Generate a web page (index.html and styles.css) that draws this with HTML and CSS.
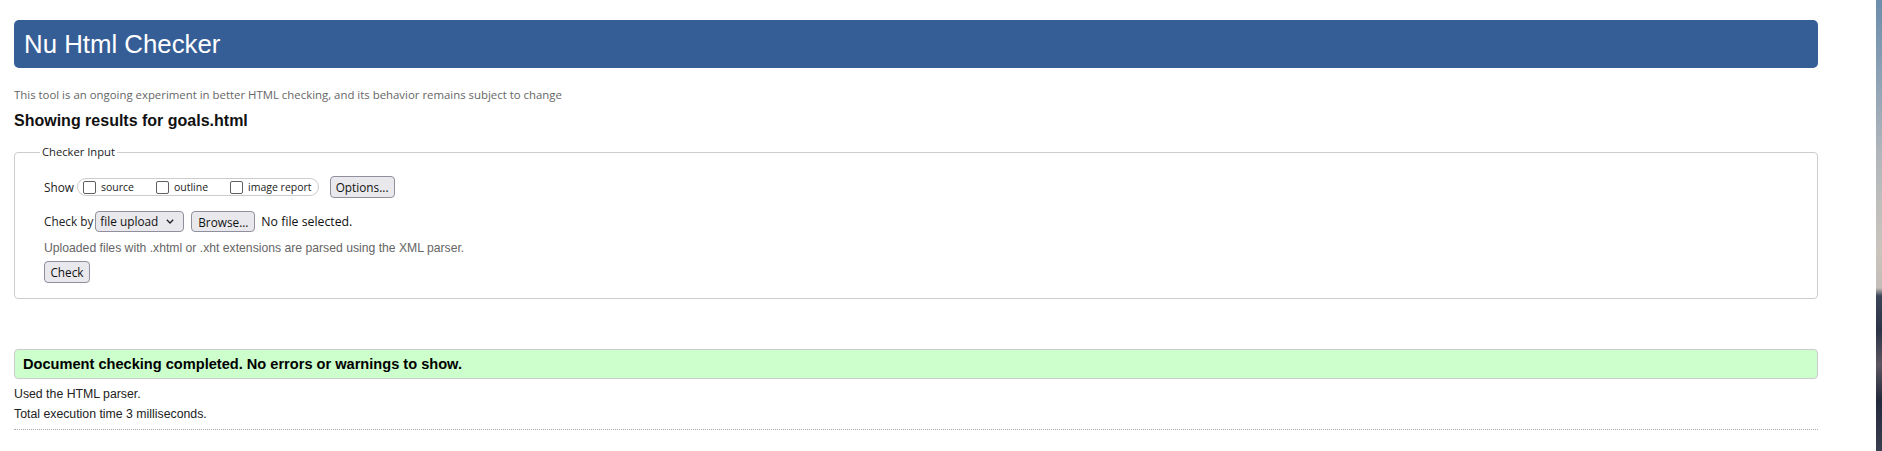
FILE: index.html
```html
<!DOCTYPE html>
<html lang="en">
<head>
<meta charset="utf-8">
<title>Nu Html Checker</title>
<link rel="stylesheet" href="styles.css">
</head>
<body>
<div class="page">
  <div class="container">
    <h1 class="banner">Nu Html Checker</h1>
    <p class="tagline">This tool is an ongoing experiment in better HTML checking, and its behavior remains subject to change</p>
    <h2 class="results">Showing results for goals.html</h2>
    <form class="checker">
      <fieldset class="input-box">
        <legend class="legend">Checker Input</legend>
        <div class="row row-show">
          <span class="label">Show</span>
          <div class="pill">
            <label class="opt"><input type="checkbox" class="cb"><span>source</span></label>
            <label class="opt"><input type="checkbox" class="cb"><span>outline</span></label>
            <label class="opt"><input type="checkbox" class="cb"><span>image report</span></label>
          </div>
          <button type="button" class="btn btn-options">Options...</button>
        </div>
        <div class="row row-check">
          <span class="label">Check by</span>
          <div class="select"><span>file upload</span><svg class="chev" width="8" height="5" viewBox="0 0 8 5"><polyline points="0.8,0.8 4,4 7.2,0.8" fill="none" stroke="#222" stroke-width="1.3"/></svg></div>
          <button type="button" class="btn btn-browse">Browse...</button>
          <span class="nofile">No file selected.</span>
        </div>
        <p class="hint">Uploaded files with .xhtml or .xht extensions are parsed using the XML parser.</p>
        <button type="button" class="btn btn-check">Check</button>
      </fieldset>
    </form>
    <p class="success">Document checking completed. No errors or warnings to show.</p>
    <p class="info info-first">Used the HTML parser.</p>
    <p class="info">Total execution time 3 milliseconds.</p>
    <hr class="rule">
  </div>
</div>
<div class="strip"></div>
</body>
</html>
```

FILE: styles.css
```css
* { box-sizing: border-box; }
html, body { margin: 0; height: 100%; }
body {
  display: flex;
  background: #fff;
  font-family: "Liberation Sans", Arial, sans-serif;
  color: #000;
}
.page { flex: 1; min-width: 0; }
.container { margin: 0 58px 0 14px; padding-top: 20px; }

.banner {
  margin: 0;
  height: 48px;
  display: flex;
  align-items: center;
  padding-left: 10px;
  background: #365e96;
  color: #fff;
  border-radius: 5px;
  font-size: 25.8px;
  font-weight: normal;
}
.tagline {
  margin: 19px 0 0;
  font-family: "Open Sans", sans-serif;
  font-size: 11.4px;
  line-height: 16px;
  color: #666;
}
.results {
  margin: 8px 0 0;
  font-size: 16px;
  line-height: 20px;
  font-weight: bold;
  color: #111;
}
.checker { margin: 0; }
.input-box {
  margin: 13px 0 0;
  padding: 0 15px 15px 29px;
  border: 1px solid #ccc;
  border-radius: 4px;
  min-width: 0;
}
.legend {
  margin-left: -4px;
  padding: 0 2px;
  font-family: "Open Sans", sans-serif;
  font-size: 11.2px;
  line-height: 16px;
  color: #222;
}
.row { display: flex; align-items: center; height: 22px; }
.row-show { margin-top: 16px; }
.row-check { margin-top: 12px; }
.label {
  font-family: "Open Sans", sans-serif;
  font-size: 11.8px;
  color: #222;
}
.row-show .label { margin-right: 3px; }
.row-check .label { margin-right: 2px; }
.pill {
  display: flex;
  align-items: center;
  height: 18px;
  padding: 0 6px 0 5px;
  border: 1px solid #ccc;
  border-radius: 9px;
  gap: 22px;
  margin-right: 11px;
}
.opt {
  display: flex;
  align-items: center;
  font-family: "Open Sans", sans-serif;
  font-size: 10.5px;
  color: #222;
}
.cb {
  appearance: none;
  -webkit-appearance: none;
  width: 13px;
  height: 13px;
  margin: 0 5px 0 0;
  border: 1px solid #5f5f5f;
  border-radius: 2px;
  background: #fff;
}
.btn {
  height: 22px;
  padding: 0 5px;
  border: 1px solid #8f8f9d;
  border-radius: 4px;
  background: #e9e9ed;
  font-family: "Open Sans", sans-serif;
  font-size: 11.8px;
  color: #111;
  line-height: 20px;
}
.btn-options { width: 65px; }
.select {
  display: flex;
  align-items: center;
  justify-content: space-between;
  width: 89px;
  height: 21px;
  padding: 0 9px 0 4px;
  border: 1px solid #8f8f9d;
  border-radius: 4px;
  background: #e9e9ed;
  font-family: "Open Sans", sans-serif;
  font-size: 11.8px;
  color: #111;
  margin-right: 7px;
}
.chev { display: block; }
.btn-browse { width: 64px; height: 21px; margin-right: 6px; }
.nofile {
  font-family: "Open Sans", sans-serif;
  font-size: 12.3px;
  color: #111;
}
.hint {
  margin: 8px 0 0;
  font-size: 12.2px;
  line-height: 16px;
  color: #666;
}
.btn-check { display: block; width: 46px; margin-top: 5px; }

.success {
  margin: 50px 0 0;
  height: 30px;
  padding-left: 8px;
  border: 1px solid #ccc;
  border-radius: 4px;
  background: #ccffcc;
  font-size: 14.6px;
  font-weight: bold;
  line-height: 28px;
  color: #000;
}
.info {
  margin: 0;
  font-size: 12.3px;
  line-height: 20px;
  color: #222;
}
.info-first { margin-top: 5px; }
.rule {
  margin: 5px 0 0;
  height: 0;
  border: 0;
  border-top: 1px dotted #aaa;
}
.strip {
  width: 6px;
  flex: none;
  background: linear-gradient(to bottom,
    #6c8dac 0px, #8aa0b4 70px, #b3b7bb 160px, #c9c4bc 250px, #c2bdb6 288px,
    #3b4558 296px, #2c3447 330px, #5b5560 365px, #232a3b 400px, #3a3f50 451px);
}
```
